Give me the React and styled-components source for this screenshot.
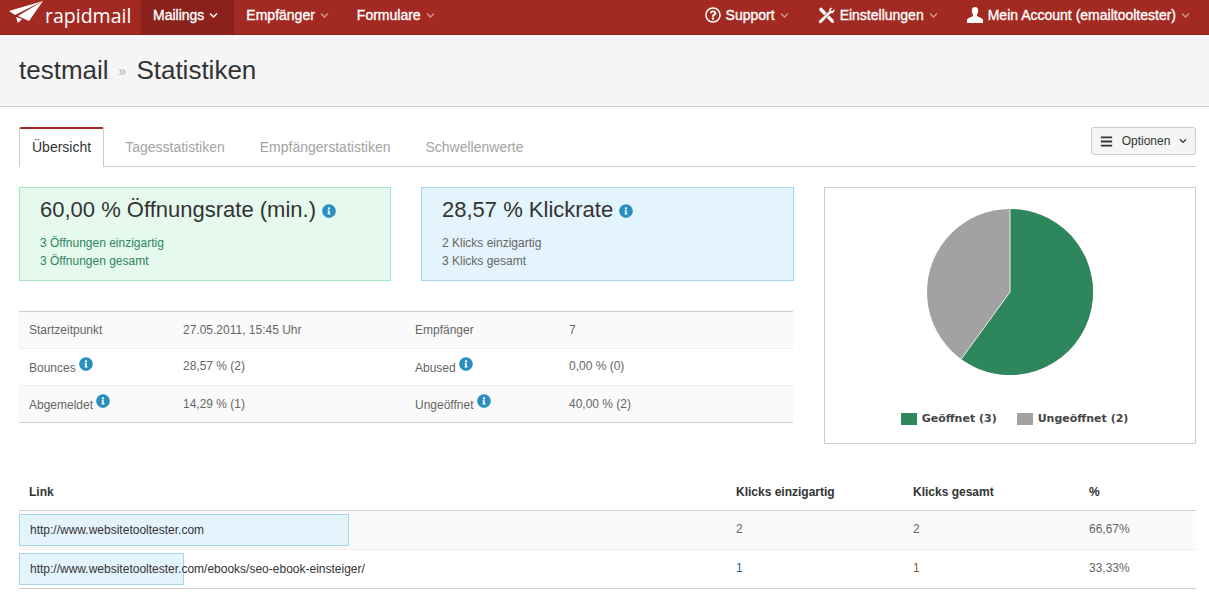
import styled, { createGlobalStyle } from "styled-components"
import { FaBars, FaChevronDown, FaInfoCircle, FaRegQuestionCircle } from "react-icons/fa"

const GlobalStyle = createGlobalStyle`
  html, body {
    margin: 0;
    padding: 0;
    background: #fff;
    font-family: "Liberation Sans", Arial, sans-serif;
    font-size: 12px;
    color: #555;
  }
  * {
    box-sizing: border-box;
  }
`

const statRows = [
  ["Startzeitpunkt", false, "27.05.2011, 15:45 Uhr", "Empfänger", false, "7"],
  ["Bounces", true, "28,57 % (2)", "Abused", true, "0,00 % (0)"],
  ["Abgemeldet", true, "14,29 % (1)", "Ungeöffnet", true, "40,00 % (2)"],
]

const links = [
  { url: "http://www.websitetooltester.com", bar: 330, unique: 2, total: 2, pct: "66,67%" },
  { url: "http://www.websitetooltester.com/ebooks/seo-ebook-einsteiger/", bar: 165, unique: 1, total: 1, pct: "33,33%", linked: true },
]

const ToolsIcon = () => (
  <svg width="17" height="17" viewBox="0 0 17 17">
    <path d="M1.5 1 L3.5 .5 L15.5 13 L16 15.5 L14 16 L1.5 3.5 Z" fill="#fff" />
    <path d="M16.5 1.5 L14 4 L12.8 3.2 L15 .8 C12.8 -.3 10.3 1.6 11 4 L1 13.6 C.2 14.4 .6 15.6 1.2 16 C1.8 16.6 2.9 16.6 3.5 16 L13 6.3 C15.5 7 17.6 4.2 16.5 1.5 Z" fill="#fff" stroke="#a32a22" strokeWidth=".7" />
  </svg>
)

const UserIcon = () => (
  <svg width="16" height="16" viewBox="0 0 16 16">
    <path d="M8 0 C10.4 0 11.4 1.8 11.2 4 C11.1 5.6 10.6 6.8 10 7.6 C9.7 8.2 9.9 9 10.7 9.4 L14.2 10.9 C15.4 11.4 16 12.3 16 13.4 L16 16 L0 16 L0 13.4 C0 12.3 .6 11.4 1.8 10.9 L5.3 9.4 C6.1 9 6.3 8.2 6 7.6 C5.4 6.8 4.9 5.6 4.8 4 C4.6 1.8 5.6 0 8 0 Z" fill="#fff" />
  </svg>
)

const App = () => {
  return (
    <>
      <GlobalStyle />
      <Nav>
        <NavGroup>
          <Logo>
            <svg width="35" height="24" viewBox="0 0 35 24">
              <path d="M0 10 L34 0 L6 14 Z M9 15 L34 0 L20 20 Z M7 16 L13 18 L9 22 Z" fill="#fff" />
            </svg>
            <LogoText>rapidmail</LogoText>
          </Logo>
          <NavItem $active>
            Mailings <Chevron $bright />
          </NavItem>
          <NavItem>
            Empfänger <Chevron />
          </NavItem>
          <NavItem>
            Formulare <Chevron />
          </NavItem>
        </NavGroup>
        <NavGroup>
          <NavRight>
            <FaRegQuestionCircle size={16} /> Support <Chevron />
          </NavRight>
          <NavRight>
            <ToolsIcon /> Einstellungen <Chevron />
          </NavRight>
          <NavRight>
            <UserIcon /> Mein Account (emailtooltester) <Chevron />
          </NavRight>
        </NavGroup>
      </Nav>
      <PageHead>
        <PageTitle>testmail</PageTitle>
        <Crumb>»</Crumb>
        <PageTitle>Statistiken</PageTitle>
      </PageHead>
      <Content>
        <TabBar>
          <Tabs>
            <Tab $active>Übersicht</Tab>
            <Tab>Tagesstatistiken</Tab>
            <Tab>Empfängerstatistiken</Tab>
            <Tab>Schwellenwerte</Tab>
          </Tabs>
          <OptionsButton>
            <FaBars size={13} />
            <span>Optionen</span>
            <FaChevronDown size={8} />
          </OptionsButton>
        </TabBar>
        <Overview>
          <LeftColumn>
            <Cards>
              <Card $tone="green">
                <CardTitle>
                  60,00 % Öffnungsrate (min.) <Info $size={14} />
                </CardTitle>
                <CardLine>3 Öffnungen einzigartig</CardLine>
                <CardLine>3 Öffnungen gesamt</CardLine>
              </Card>
              <Card $tone="blue">
                <CardTitle>
                  28,57 % Klickrate <Info $size={14} />
                </CardTitle>
                <CardLine>2 Klicks einzigartig</CardLine>
                <CardLine>3 Klicks gesamt</CardLine>
              </Card>
            </Cards>
            <StatTable>
              {statRows.map(r => (
                <StatRow key={r[0]}>
                  <span>
                    {r[0]} {r[1] && <Info $size={14} $raised />}
                  </span>
                  <span>{r[2]}</span>
                  <span>
                    {r[3]} {r[4] && <Info $size={14} $raised />}
                  </span>
                  <span>{r[5]}</span>
                </StatRow>
              ))}
            </StatTable>
          </LeftColumn>
          <ChartPanel>
            <svg width="168" height="168" viewBox="-84 -84 168 168">
              <circle r="83" fill="#a2a2a2" />
              <path d="M0 0 L0 -83 A83 83 0 1 1 -48.8 67.1 Z" fill="#2e865c" />
              <path d="M-48.8 67.1 L0 0 L0 -83" fill="none" stroke="#f0f0f0" strokeWidth="1" />
            </svg>
            <Legend>
              <LegendItem>
                <Swatch $color="#2e865c" /> Geöffnet (3)
              </LegendItem>
              <LegendItem>
                <Swatch $color="#a2a2a2" /> Ungeöffnet (2)
              </LegendItem>
            </Legend>
          </ChartPanel>
        </Overview>
        <LinkHead>
          <span>Link</span>
          <span>Klicks einzigartig</span>
          <span>Klicks gesamt</span>
          <span>%</span>
        </LinkHead>
        {links.map((l, i) => (
          <LinkRow key={l.url} $odd={i === 0}>
            <LinkCell>
              <LinkBar style={{ width: l.bar }} />
              <LinkText>{l.url}</LinkText>
            </LinkCell>
            <Num $linked={l.linked}>{l.unique}</Num>
            <Num $linked={l.linked} $brown>{l.total}</Num>
            <Num>{l.pct}</Num>
          </LinkRow>
        ))}
      </Content>
    </>
  )
}

export default App

const Nav = styled.div`
  height: 35px;
  background: #a32a22;
  border-bottom: 1px solid #8e2119;
  display: flex;
  justify-content: space-between;
  color: #fff;
  font-size: 14px;
  -webkit-text-stroke: 0.35px #fff;
`
const NavGroup = styled.div`
  display: flex;
  align-items: stretch;
`
const Logo = styled.div`
  width: 141px;
  padding: 1px 0 0 9px;
  display: flex;
  align-items: flex-start;
  gap: 1px;
  -webkit-text-stroke: 0;
`
const LogoText = styled.span`
  font-family: "Open Sans", sans-serif;
  font-size: 19.5px;
  font-weight: 400;
  line-height: 30px;
`
const NavItem = styled.div`
  display: flex;
  align-items: center;
  gap: 5px;
  padding: 0 16px 4px 12px;
  background: ${({ $active }) => ($active ? "#8a211b" : "transparent")};
`
const NavRight = styled.div`
  display: flex;
  align-items: center;
  gap: 5px;
  padding-bottom: 4px;
  margin-right: 29px;
  &:last-child {
    margin-right: 19px;
  }
`
const Chevron = styled(FaChevronDown).attrs({ size: 9 })`
  opacity: ${({ $bright }) => ($bright ? 1 : 0.5)};
`
const PageHead = styled.div`
  height: 72px;
  background: #f5f5f5;
  border-bottom: 1px solid #ccc;
  display: flex;
  align-items: center;
  padding-left: 19px;
  gap: 10px;
`
const PageTitle = styled.h1`
  margin: 0;
  font-size: 26px;
  font-weight: normal;
  color: #333;
`
const Crumb = styled.span`
  font-size: 14px;
  color: #aaa;
`
const Content = styled.div`
  padding: 20px 13px 0 19px;
`
const TabBar = styled.div`
  display: flex;
  justify-content: space-between;
  align-items: flex-start;
  height: 40px;
  border-bottom: 1px solid #ccc;
`
const Tabs = styled.div`
  display: flex;
  height: 40px;
`
const Tab = styled.div`
  height: 40px;
  padding: 0 12px 2px;
  margin-right: 9px;
  display: flex;
  align-items: center;
  font-size: 14px;
  color: ${({ $active }) => ($active ? "#333" : "#a3a3a3")};
  background: ${({ $active }) => ($active ? "#fff" : "transparent")};
  border: 1px solid ${({ $active }) => ($active ? "#ccc" : "transparent")};
  border-bottom: none;
  border-top: 2px solid ${({ $active }) => ($active ? "#a32a22" : "transparent")};
  border-radius: 2px 2px 0 0;
  &:first-child {
    margin-right: 8px;
  }
`
const OptionsButton = styled.div`
  width: 105px;
  height: 28px;
  background: #f5f5f5;
  border: 1px solid #ccc;
  border-radius: 3px;
  display: flex;
  align-items: center;
  justify-content: center;
  gap: 9px;
  font-size: 12px;
  color: #333;
`
const Overview = styled.div`
  display: flex;
  justify-content: space-between;
  margin-top: 20px;
`
const LeftColumn = styled.div`
  width: 775px;
`
const Cards = styled.div`
  display: grid;
  grid-template-columns: 372px 373px;
  gap: 30px;
`
const Card = styled.div`
  height: 94px;
  padding: 9px 20px;
  border: 1px solid ${({ $tone }) => ($tone === "green" ? "#a5e3bc" : "#a8d5ec")};
  background: ${({ $tone }) => ($tone === "green" ? "#e6f9ee" : "#e4f4fc")};
  color: ${({ $tone }) => ($tone === "green" ? "#2e865c" : "#666")};
`
const CardTitle = styled.div`
  font-size: 22px;
  line-height: 26px;
  color: #333;
  margin-bottom: 11px;
`
const CardLine = styled.div`
  font-size: 12px;
  line-height: 18px;
`
const Info = styled(FaInfoCircle).attrs(({ $size }) => ({ size: $size }))`
  color: #2a8fc0;
  position: relative;
  top: ${({ $raised }) => ($raised ? "-1px" : "1px")};
`
const StatTable = styled.div`
  margin: 30px 1px 0 0;
  border-top: 1px solid #ccc;
  border-bottom: 1px solid #ccc;
`
const StatRow = styled.div`
  height: 36px;
  padding: 0 0 1px 10px;
  display: grid;
  grid-template-columns: 154px 232px 154px 1fr;
  align-items: center;
  color: #666;
  background: #fafafa;
  &:nth-child(2) {
    height: 38px;
    padding-bottom: 2px;
    background: #fff;
    border-top: 1px solid #eee;
    border-bottom: 1px solid #eee;
  }
`
const ChartPanel = styled.div`
  width: 372px;
  height: 257px;
  border: 1px solid #ccc;
  padding-top: 20px;
  display: flex;
  flex-direction: column;
  align-items: center;
`
const Legend = styled.div`
  display: flex;
  gap: 20px;
  margin-top: 36px;
  padding-left: 9px;
`
const LegendItem = styled.div`
  display: flex;
  align-items: center;
  gap: 5px;
  font-family: "DejaVu Sans", sans-serif;
  font-size: 11px;
  font-weight: bold;
  color: #444;
`
const Swatch = styled.span`
  width: 16px;
  height: 12px;
  background: ${({ $color }) => $color};
`
const linkGrid = `
  display: grid;
  grid-template-columns: 707px 177px 176px 1fr;
  align-items: center;
`
const LinkHead = styled.div`
  ${linkGrid}
  margin-top: 30px;
  height: 37px;
  padding-bottom: 1px;
  border-bottom: 1px solid #ccc;
  font-weight: bold;
  color: #333;
  span {
    padding-left: 10px;
  }
`
const LinkRow = styled.div`
  ${linkGrid}
  height: 39px;
  background: ${({ $odd }) => ($odd ? "#fafafa" : "#fff")};
  border-bottom: 1px solid ${({ $odd }) => ($odd ? "#eee" : "#ccc")};
`
const LinkCell = styled.div`
  position: relative;
  height: 38px;
  display: flex;
  align-items: center;
`
const LinkBar = styled.div`
  position: absolute;
  left: 0;
  top: 3px;
  height: 32px;
  background: #e4f4fc;
  border: 1px solid #a8d5ec;
`
const LinkText = styled.span`
  position: relative;
  padding-left: 11px;
  color: #333;
`
const Num = styled.div`
  padding: 0 0 2px 10px;
  color: ${({ $linked, $brown }) => ($linked ? ($brown ? "#8a5a2a" : "#2a6a9a") : "#666")};
`
